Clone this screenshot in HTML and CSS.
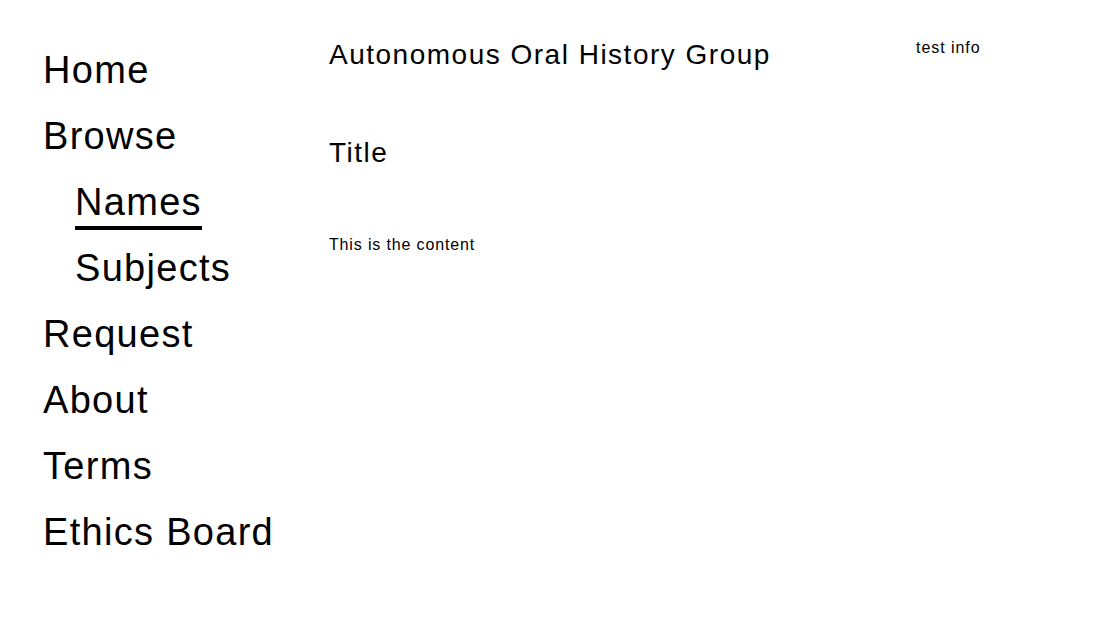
FILE: index.html
```html
<!DOCTYPE html>
<html lang="en">
<head>
<meta charset="utf-8">
<title>Autonomous Oral History Group</title>
<link rel="stylesheet" href="styles.css">
</head>
<body>
<div class="page">
  <nav class="nav">
    <ul class="nav-list">
      <li class="nav-item"><a href="#">Home</a></li>
      <li class="nav-item"><a href="#">Browse</a>
        <ul class="sub-list">
          <li class="nav-item"><a href="#" class="active">Names</a></li>
          <li class="nav-item"><a href="#">Subjects</a></li>
        </ul>
      </li>
      <li class="nav-item"><a href="#">Request</a></li>
      <li class="nav-item"><a href="#">About</a></li>
      <li class="nav-item"><a href="#">Terms</a></li>
      <li class="nav-item"><a href="#">Ethics Board</a></li>
    </ul>
  </nav>
  <main class="main">
    <h1 class="site-title">Autonomous Oral History Group</h1>
    <h2 class="page-title">Title</h2>
    <p class="content">This is the content</p>
  </main>
  <aside class="aside">
    <p class="info">test info</p>
  </aside>
</div>
</body>
</html>
```
FILE: styles.css
```css
html, body {
  margin: 0;
  padding: 0;
  background: #ffffff;
  color: #000000;
  font-family: "Liberation Sans", Arial, sans-serif;
}

.page {
  display: grid;
  grid-template-columns: 286px 587px 1fr;
  padding: 0 0 0 43px;
}

.nav-list,
.sub-list {
  list-style: none;
  margin: 0;
  padding: 0;
}

.nav-list {
  padding-top: 37px;
}

.sub-list {
  padding-left: 32px;
}

.nav-item {
  font-size: 38px;
  line-height: 66px;
  letter-spacing: 1.3px;
}

.nav-item a {
  color: #000000;
  text-decoration: none;
}

.nav-item a.active {
  padding-bottom: 3px;
  border-bottom: 4px solid #000000;
}

.main {
  padding-top: 35px;
}

.site-title {
  margin: 0;
  font-size: 28px;
  font-weight: normal;
  line-height: 40px;
  letter-spacing: 1.5px;
}

.page-title {
  margin: 58px 0 0 0;
  font-size: 28px;
  font-weight: normal;
  line-height: 40px;
  letter-spacing: 1.5px;
}

.content {
  margin: 62px 0 0 0;
  font-size: 16px;
  line-height: 20px;
  letter-spacing: 0.85px;
}

.aside {
  padding-top: 38px;
}

.info {
  margin: 0;
  font-size: 16px;
  line-height: 20px;
  letter-spacing: 0.95px;
}
```
